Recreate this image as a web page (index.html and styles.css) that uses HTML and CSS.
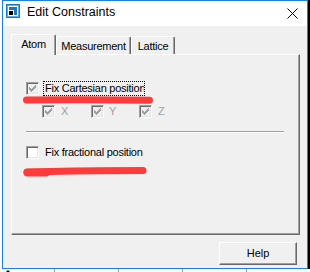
FILE: index.html
```html
<!DOCTYPE html>
<html>
<head>
    <meta charset="UTF-8">
    <title>Edit Constraints</title>
    <link rel="stylesheet" href="styles.css">
</head>
<body>
    <div class="desk">
        <div class="window">
            <div class="titlebar">
                <svg class="app-icon" width="14" height="14" viewBox="0 0 14 14">
                    <rect x="0.5" y="0.5" width="13" height="13" fill="#fff" stroke="#1c74c4"/>
                    <rect x="1.5" y="1.5" width="11" height="11" fill="none" stroke="#6aa8e0"/>
                    <path d="M3 3h8v8h-3v-5h-5z" fill="#1c74c4"/>
                    <rect x="3" y="7" width="4" height="4" fill="#000"/>
                </svg>
                <span class="title">Edit Constraints</span>
                <svg class="close" width="11" height="11" viewBox="0 0 11 11">
                    <path d="M0.5 0.5L10.5 10.5M10.5 0.5L0.5 10.5" stroke="#000" stroke-width="1"/>
                </svg>
            </div>
            <div class="client">
                <div class="tabs">
                    <div class="tab active tab-atom">Atom</div>
                    <div class="tab tab-measure">Measurement</div>
                    <div class="tab tab-lattice">Lattice</div>
                </div>
                <div class="panel">
                    <div class="row">
                        <span class="check disabled">
                            <svg width="7" height="7" viewBox="0 0 7 7"><path d="M6 0h1v1h-1zM5 1h2v1h-2zM0 2h1v1h-1zM4 2h3v1h-3zM0 3h2v1h-2zM3 3h3v1h-3zM0 4h5v1h-5zM1 5h3v1h-3zM2 6h1v1h-1z"/></svg>
                        </span>
                        <span class="label focus">Fix Cartesian position</span>
                    </div>
                    <div class="axes">
                        <div class="axis">
                            <span class="check disabled">
                                <svg width="7" height="7" viewBox="0 0 7 7"><path d="M6 0h1v1h-1zM5 1h2v1h-2zM0 2h1v1h-1zM4 2h3v1h-3zM0 3h2v1h-2zM3 3h3v1h-3zM0 4h5v1h-5zM1 5h3v1h-3zM2 6h1v1h-1z"/></svg>
                            </span>
                            <span class="label dim">X</span>
                        </div>
                        <div class="axis axis-y">
                            <span class="check disabled">
                                <svg width="7" height="7" viewBox="0 0 7 7"><path d="M6 0h1v1h-1zM5 1h2v1h-2zM0 2h1v1h-1zM4 2h3v1h-3zM0 3h2v1h-2zM3 3h3v1h-3zM0 4h5v1h-5zM1 5h3v1h-3zM2 6h1v1h-1z"/></svg>
                            </span>
                            <span class="label dim">Y</span>
                        </div>
                        <div class="axis">
                            <span class="check disabled">
                                <svg width="7" height="7" viewBox="0 0 7 7"><path d="M6 0h1v1h-1zM5 1h2v1h-2zM0 2h1v1h-1zM4 2h3v1h-3zM0 3h2v1h-2zM3 3h3v1h-3zM0 4h5v1h-5zM1 5h3v1h-3zM2 6h1v1h-1z"/></svg>
                            </span>
                            <span class="label dim">Z</span>
                        </div>
                    </div>
                    <div class="sep"></div>
                    <div class="row row-frac">
                        <span class="check"></span>
                        <span class="label">Fix fractional position</span>
                    </div>
                </div>
                <div class="buttons">
                    <button class="btn">Help</button>
                </div>
            </div>
        </div>
        <div class="underlay">
            <div class="seg first"><span class="arrow"></span></div>
            <div class="seg"></div>
            <div class="seg"></div>
            <div class="seg"></div>
            <div class="seg"></div>
        </div>

        <!-- red marker strokes drawn over the dialog -->
        <svg class="marks" width="310" height="272" viewBox="0 0 310 272">
            <path d="M26.5 100 Q90 99.3 149.5 100.3" stroke="#ff3b3b" stroke-width="7" stroke-linecap="round" fill="none"/>
            <path d="M27 172.3 L50 171.6 Q100 170.6 143 170.6" stroke="#ff3b3b" stroke-width="7" stroke-linecap="round" fill="none"/>
            <path d="M27.5 172.6 L46 172.6" stroke="#ff3b3b" stroke-width="8" stroke-linecap="round" fill="none"/>
        </svg>
    </div>
</body>
</html>
```

FILE: styles.css
```css
* {
    margin: 0;
    padding: 0;
    box-sizing: border-box;
}

body {
    font-family: "Liberation Sans", Arial, sans-serif;
    font-size: 11px;
    background-color: #fff;
    color: #000;
}

.desk {
    position: relative;
    width: 310px;
    height: 272px;
    overflow: hidden;
    background-color: #fff;
}

.window {
    margin-left: 2px;
    width: 306px;
    height: 269px;
    border: 1px solid #1883d7;
    box-shadow: 2px 0 0 #000;
    background-color: #f0f0f0;
}

.titlebar {
    height: 25px;
    background-color: #fff;
    display: flex;
    align-items: flex-start;
    padding-top: 3px;
}

.app-icon {
    margin-left: 3px;
    flex-shrink: 0;
}

.title {
    margin-left: 7px;
    margin-top: 1px;
    font-size: 12.5px;
    line-height: 15px;
}

.close {
    margin-left: auto;
    margin-right: 9px;
    margin-top: 4px;
}

.client {
    height: 242px;
    padding: 8px 0 0 8px;
}

.tabs {
    display: flex;
    align-items: flex-end;
    height: 20px;
}

.tab {
    height: 18px;
    padding-top: 3px;
    line-height: 13px;
    text-align: center;
    letter-spacing: -0.25px;
    white-space: nowrap;
    border-top: 1px solid #fff;
    border-left: 1px solid #fff;
    border-right: 1px solid #696969;
    border-radius: 2px 2px 0 0;
    box-shadow: inset -1px 0 0 #a0a0a0;
    background-color: #f0f0f0;
}

.tab.active {
    height: 21px;
    margin-bottom: -1px;
    position: relative;
    z-index: 1;
}

.tab-atom {
    width: 45px;
}

.tab-measure {
    width: 75px;
}

.tab-lattice {
    width: 44px;
}

.panel {
    width: 289px;
    height: 181px;
    border-top: 1px solid #fff;
    border-left: 1px solid #fff;
    border-right: 1px solid #696969;
    border-bottom: 1px solid #696969;
    box-shadow: inset -1px -1px 0 #a0a0a0;
    padding: 26px 0 0 14px;
}

.row {
    display: flex;
    align-items: center;
    height: 15px;
    gap: 4px;
}

.row-frac {
    margin-top: 12px;
}

.check {
    width: 13px;
    height: 13px;
    flex-shrink: 0;
    display: flex;
    align-items: center;
    justify-content: center;
    background-color: #fff;
    border-top: 1px solid #a0a0a0;
    border-left: 1px solid #a0a0a0;
    border-right: 1px solid #fff;
    border-bottom: 1px solid #fff;
    box-shadow: inset 1px 1px 0 #696969, inset -1px -1px 0 #e3e3e3;
}

.check.disabled {
    background-color: #f0f0f0;
}

.check svg {
    fill: #a0a0a0;
}

.label {
    line-height: 13px;
    padding: 0 1px;
    border: 1px solid transparent;
    letter-spacing: -0.25px;
    white-space: nowrap;
}

.label.focus {
    width: 102px;
    overflow: hidden;
    border: 1px dotted #000;
}

.label.dim {
    color: #a0a0a0;
    padding: 0;
}

.axes {
    display: flex;
    margin: 8px 0 0 16px;
    height: 15px;
}

.axis {
    display: flex;
    align-items: center;
    gap: 5px;
    width: 49px;
}

.axis-y {
    width: 48px;
    gap: 4px;
}

.sep {
    width: 258px;
    margin-top: 12px;
    border-top: 1px solid #a0a0a0;
    border-bottom: 1px solid #fff;
}

.buttons {
    display: flex;
    justify-content: flex-end;
    padding-right: 10px;
    margin-top: 7px;
}

.btn {
    width: 78px;
    height: 23px;
    font-family: "Liberation Sans", Arial, sans-serif;
    font-size: 11px;
    line-height: 13px;
    color: #000;
    background-color: #f0f0f0;
    border-top: 1px solid #fff;
    border-left: 1px solid #fff;
    border-right: 1px solid #696969;
    border-bottom: 1px solid #696969;
    box-shadow: inset -1px -1px 0 #a0a0a0;
}

.underlay {
    display: flex;
    height: 3px;
}

.seg {
    width: 75px;
    height: 3px;
    border-left: 1px solid #a0a0a0;
}

.seg.first {
    width: 63px;
    border-left: none;
}

.arrow {
    display: block;
    width: 0;
    height: 0;
    margin: 1px 0 0 6px;
    border-left: 2px solid transparent;
    border-right: 2px solid transparent;
    border-bottom: 2px solid #000;
}

.marks {
    position: absolute;
    top: 0;
    left: 0;
    pointer-events: none;
}
```
